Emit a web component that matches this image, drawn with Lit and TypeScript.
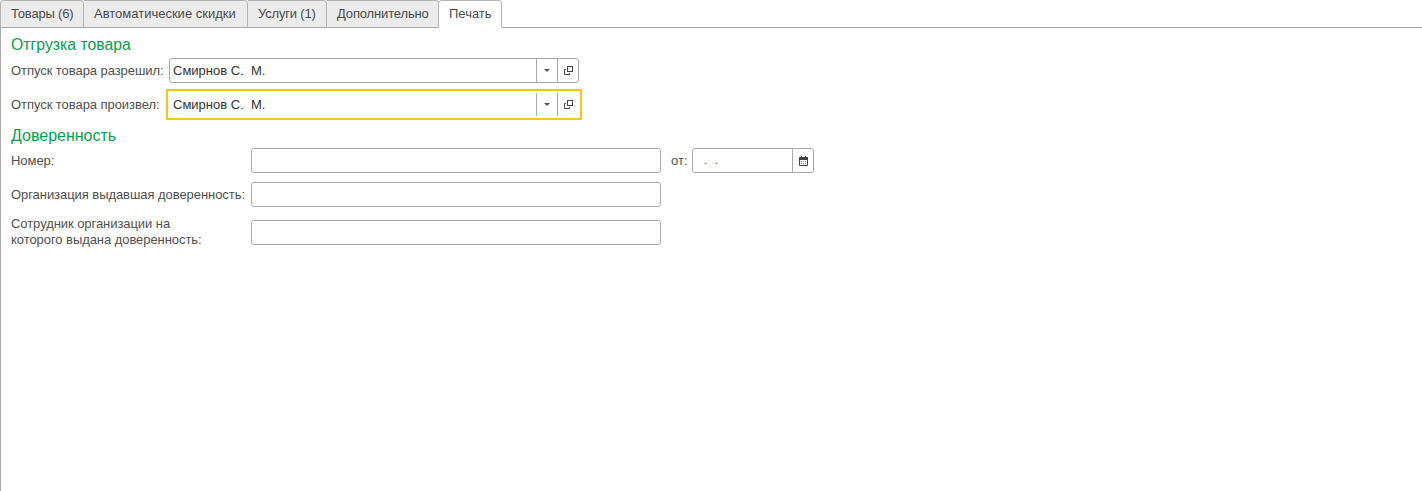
import { LitElement, html, css } from "lit";
import { customElement } from "lit/decorators.js";

@customElement("app-root")
export class AppRoot extends LitElement {
  static styles = css`
    :host { display: block; width: 1422px; height: 491px; background: #fff; overflow: hidden;
      font: 13px "Liberation Sans", Arial, sans-serif; color: #4f4f4f; box-sizing: border-box; }
    * { box-sizing: border-box; }
    .tabs { display: flex; height: 28px; border-bottom: 1px solid #a9a9a9; }
    .tab { height: 28px; padding: 5px 10px 0 10px; background: #ebebeb; border: 1px solid #b4b4b4;
      border-bottom: 1px solid #a9a9a9; border-left: 0; border-radius: 0 4px 0 0; color: #4a4a4a; white-space: nowrap; flex: none; }
    .tab.t1 { width: 84px; border-left: 1px solid #b4b4b4; border-radius: 4px 4px 0 0; letter-spacing: -0.18px; }
    .tab.t2 { width: 164px; }
    .tab.t3 { width: 79px; letter-spacing: -0.18px; }
    .tab.t4 { width: 112px; letter-spacing: -0.15px; }
    .tab.t5 { width: 64px; background: #fff; border-bottom-color: #fff; border-left: 1px solid #b4b4b4; margin-left: -1px; border-radius: 4px 4px 0 0; }
    .body { height: 463px; border-left: 1px solid #a9a9a9; padding: 8px 0 0 10px; display: flex; flex-direction: column; align-items: flex-start; }
    h2 { margin: 0; font: 400 15.8px/18px "Liberation Sans", Arial, sans-serif; color: #0a9e50; }
    .row { display: flex; align-items: center; height: 25px; }
    .r1 { margin-top: 4px; }
    .r2 { margin-top: 6px; height: 31px; }
    .h2b { margin-top: 7px; font-size: 16px; }
    .r3 { margin-top: 3px; align-items: flex-start; }
    .r4 { margin-top: 9px; }
    .r5 { margin-top: 13px; align-items: flex-start; }
    .lab { flex: none; letter-spacing: -0.06px; white-space: nowrap; }
    .l1 { width: 158px; }
    .l2 { width: 155px; }
    .l3 { width: 240px; }
    .r3 .lab { padding-top: 5px; }
    .r5 .lab { line-height: 16px; margin-top: -4px; }
    .inp { height: 100%; border: 1px solid #a9a9a9; border-radius: 3px; background: #fff; display: flex; align-items: stretch; }
    .w410 { width: 410px; }
    .val { flex: 1; padding: 0 0 0 3px; color: #333; line-height: 23px; white-space: pre; }
    .btn { flex: none; width: 21px; display: flex; align-items: center; justify-content: center; border-left: 1px solid #a9a9a9; }
    .btn.op { padding-left: 1px; }
    .focus { width: 416px; border: 2px solid #f5c518; border-radius: 0; padding: 2px 2px 2px 3px; }
    .focus .val { padding-left: 2px; line-height: 23px; }
    .focus .in { flex: 1; display: flex; }
    .ot { margin-left: 10px; width: 21px; padding-top: 5px; flex: none; }
    .date { width: 122px; height: 100%; }
    .dots { flex: 1; padding-left: 7px; color: #1c86d8; line-height: 22px; white-space: pre; }
    .cal { width: 21px; }
    svg { display: block; }
  `;

  private arrow() {
    return html`<svg width="6" height="3" viewBox="0 0 6 3"><path d="M0 0h6L3 3z" fill="#555"/></svg>`;
  }
  private open() {
    return html`<svg width="9" height="9" viewBox="0 0 9 9" fill="none" stroke="#444" stroke-width="1"><rect x="3.500" y="0.500" width="5" height="5"/><path d="M2 3.500H0.500V8.500H5.500V7"/></svg>`;
  }
  private calendar() {
    return html`<svg width="9" height="10" viewBox="0 0 9 10"><path d="M0.500 2.500h8v7h-8z" fill="#fff" stroke="#444"/><path d="M0 1h9v3H0z" fill="#444"/><path d="M2 0h1v2H2zM6 0h1v2H6z" fill="#444"/><path d="M2 5h1v1H2zM4 5h1v1H4zM6 5h1v1H6zM2 7h1v1H2zM4 7h1v1H4zM6 7h1v1H6z" fill="#777"/></svg>`;
  }

  render() {
    const tail = html`<span class="btn">${this.arrow()}</span><span class="btn op">${this.open()}</span>`;
    return html`
      <div class="tabs">
        <div class="tab t1">Товары (6)</div>
        <div class="tab t2">Автоматические скидки</div>
        <div class="tab t3">Услуги (1)</div>
        <div class="tab t4">Дополнительно</div>
        <div class="tab t5">Печать</div>
      </div>
      <div class="body">
        <h2>Отгрузка товара</h2>
        <div class="row r1">
          <div class="lab l1">Отпуск товара разрешил:</div>
          <div class="inp w410"><span class="val">Смирнов С.  М.</span>${tail}</div>
        </div>
        <div class="row r2">
          <div class="lab l2">Отпуск товара произвел:</div>
          <div class="inp focus"><div class="in"><span class="val">Смирнов С.  М.</span>${tail}</div></div>
        </div>
        <h2 class="h2b">Доверенность</h2>
        <div class="row r3">
          <div class="lab l3">Номер:</div>
          <div class="inp w410"></div>
          <div class="ot">от:</div>
          <div class="inp date"><span class="dots"> .  .</span><span class="btn cal">${this.calendar()}</span></div>
        </div>
        <div class="row r4">
          <div class="lab l3">Организация выдавшая доверенность:</div>
          <div class="inp w410"></div>
        </div>
        <div class="row r5">
          <div class="lab l3">Сотрудник организации на<br />которого выдана доверенность:</div>
          <div class="inp w410"></div>
        </div>
      </div>
    `;
  }
}
